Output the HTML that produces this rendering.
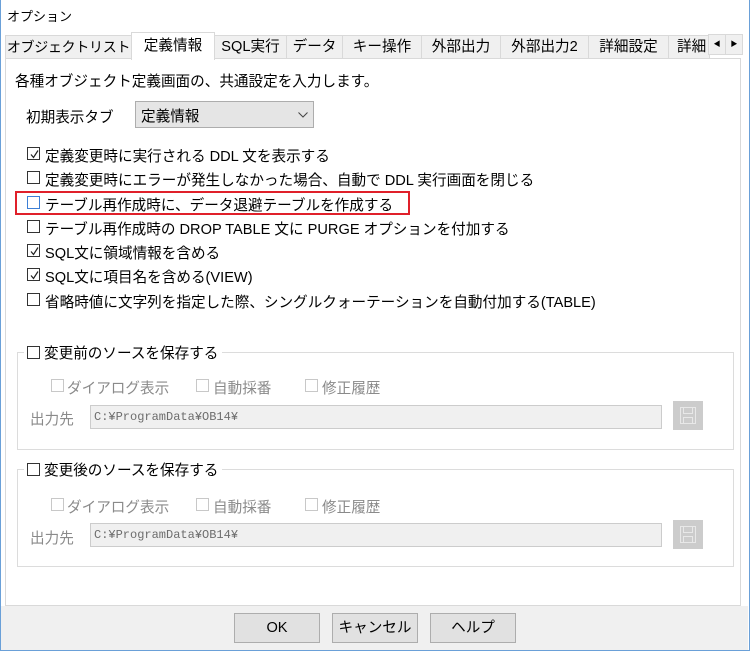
<!DOCTYPE html>
<html><head><meta charset="utf-8"><style>
*{box-sizing:border-box;margin:0;padding:0}
body{width:750px;height:651px;position:relative;background:#fff;font-family:"Liberation Sans","Noto Sans CJK JP",sans-serif;font-size:14.6px;color:#000;overflow:hidden}
.a{position:absolute;white-space:nowrap}
.win{position:absolute;left:0;top:0;width:750px;height:651px;border:1px solid #6aa0d8;border-top:none}
.tab{position:absolute;top:35px;height:24px;background:#f0f0f0;border:1px solid #d9d9d9;font-size:14.6px;line-height:22px;text-align:center;white-space:nowrap;overflow:hidden}
.panel{position:absolute;left:5px;top:58px;width:736px;height:548px;border:1px solid #d9d9d9;background:#fff}
.bot{position:absolute;left:1px;top:606px;width:747px;height:44px;background:#f0f0f0}
.cb{position:absolute;width:13px;height:13px;border:1px solid #333;background:#fff}
.cb.g{border-color:#c8c8c8}
.cb svg{position:absolute;left:1px;top:1px}
.btn{position:absolute;top:613px;height:30px;width:86px;border:1px solid #adadad;background:#e1e1e1;text-align:center;line-height:28px}
.grp{position:absolute;left:17px;width:717px;height:98px;border:1px solid #dcdcdc}
.inp{position:absolute;left:90px;width:572px;height:24px;border:1px solid #ccc;background:#f0f0f0;font-family:"Liberation Mono","Noto Sans CJK JP",monospace;font-size:12px;line-height:22px;padding-left:3px;color:#6d6d6d}
.sv{position:absolute;left:673px;width:30px;height:29px;background:#ccc}
.sv svg{position:absolute;left:7px;top:6px}
.gt{color:#8a8a8a}
</style></head><body>
<div class="a" style="left:7px;top:6px;font-size:13px">オプション</div>
<div class="panel"></div>
<div class="tab" style="left:5px;width:127px;font-size:14px;letter-spacing:-0.3px">オブジェクトリスト</div>
<div class="tab" style="left:131px;top:32px;height:28px;width:84px;background:#fff;border-bottom:none;line-height:26px;z-index:2">定義情報</div>
<div class="tab" style="left:214px;width:73px">SQL実行</div>
<div class="tab" style="left:286px;width:57px">データ</div>
<div class="tab" style="left:342px;width:80px">キー操作</div>
<div class="tab" style="left:421px;width:80px">外部出力</div>
<div class="tab" style="left:500px;width:89px">外部出力2</div>
<div class="tab" style="left:588px;width:81px">詳細設定</div>
<div class="tab" style="left:668px;width:42px;text-align:left;padding-left:8px">詳細</div>
<div class="tab" style="left:708px;top:34px;width:18px;height:21px;font-size:7px;line-height:19px">◀</div>
<div class="tab" style="left:725px;top:34px;width:18px;height:21px;font-size:7px;line-height:19px">▶</div>

<div class="a" style="left:15px;top:70px">各種オブジェクト定義画面の、共通設定を入力します。</div>
<div class="a" style="left:26px;top:106px">初期表示タブ</div>
<div class="a" style="left:135px;top:101px;width:179px;height:27px;border:1px solid #adadad;background:#e5e5e5;padding:3px 0 0 5px">定義情報<svg style="position:absolute;left:162px;top:10px" width="10" height="6"><path d="M0.5 0.5 L5 5 L9.5 0.5" fill="none" stroke="#444"/></svg></div>

<div class="cb" style="left:27px;top:147px"><svg width="11" height="11"><path d="M2 5.5 L4.5 8.5 L9 1.5" fill="none" stroke="#222" stroke-width="1.2"/></svg></div>
<div class="a" style="left:45px;top:145px">定義変更時に実行される DDL 文を表示する</div>
<div class="cb" style="left:27px;top:171px"></div>
<div class="a" style="left:45px;top:169px">定義変更時にエラーが発生しなかった場合、自動で DDL 実行画面を閉じる</div>
<div class="a" style="left:15px;top:191px;width:395px;height:24px;border:2px solid #e0202a"></div>
<div class="cb" style="left:27px;top:196px;border-color:#3d7fd6"></div>
<div class="a" style="left:45px;top:194px">テーブル再作成時に、データ退避テーブルを作成する</div>
<div class="cb" style="left:27px;top:220px"></div>
<div class="a" style="left:45px;top:218px">テーブル再作成時の DROP TABLE 文に PURGE オプションを付加する</div>
<div class="cb" style="left:27px;top:244px"><svg width="11" height="11"><path d="M2 5.5 L4.5 8.5 L9 1.5" fill="none" stroke="#222" stroke-width="1.2"/></svg></div>
<div class="a" style="left:45px;top:242px">SQL文に領域情報を含める</div>
<div class="cb" style="left:27px;top:268px"><svg width="11" height="11"><path d="M2 5.5 L4.5 8.5 L9 1.5" fill="none" stroke="#222" stroke-width="1.2"/></svg></div>
<div class="a" style="left:45px;top:266px">SQL文に項目名を含める(VIEW)</div>
<div class="cb" style="left:27px;top:293px"></div>
<div class="a" style="left:45px;top:291px">省略時値に文字列を指定した際、シングルクォーテーションを自動付加する(TABLE)</div>

<div class="grp" style="top:352px"></div>
<div class="a" style="left:24px;top:342px;background:#fff;padding:0 4px 0 3px;height:20px"><span class="cb" style="left:3px;top:4px;position:absolute"></span><span style="margin-left:17px">変更前のソースを保存する</span></div>
<div class="cb g" style="left:51px;top:379px"></div><div class="a gt" style="left:67px;top:377px">ダイアログ表示</div>
<div class="cb g" style="left:196px;top:379px"></div><div class="a gt" style="left:213px;top:377px">自動採番</div>
<div class="cb g" style="left:305px;top:379px"></div><div class="a gt" style="left:322px;top:377px">修正履歴</div>
<div class="a gt" style="left:30px;top:408px">出力先</div>
<div class="inp" style="top:405px">C:¥ProgramData¥OB14¥</div>
<div class="sv" style="top:401px"><svg width="16" height="17"><path d="M0.5 0.5 H15.5 V16.5 H0.5 Z M3.5 0.5 V6.5 H12.5 V0.5 M3.5 16.5 V10.5 H12.5 V16.5" fill="none" stroke="#e8e8e8"/></svg></div>

<div class="grp" style="top:469px"></div>
<div class="a" style="left:24px;top:459px;background:#fff;padding:0 4px 0 3px;height:20px"><span class="cb" style="left:3px;top:4px;position:absolute"></span><span style="margin-left:17px">変更後のソースを保存する</span></div>
<div class="cb g" style="left:51px;top:498px"></div><div class="a gt" style="left:67px;top:496px">ダイアログ表示</div>
<div class="cb g" style="left:196px;top:498px"></div><div class="a gt" style="left:213px;top:496px">自動採番</div>
<div class="cb g" style="left:305px;top:498px"></div><div class="a gt" style="left:322px;top:496px">修正履歴</div>
<div class="a gt" style="left:30px;top:527px">出力先</div>
<div class="inp" style="top:523px">C:¥ProgramData¥OB14¥</div>
<div class="sv" style="top:520px"><svg width="16" height="17"><path d="M0.5 0.5 H15.5 V16.5 H0.5 Z M3.5 0.5 V6.5 H12.5 V0.5 M3.5 16.5 V10.5 H12.5 V16.5" fill="none" stroke="#e8e8e8"/></svg></div>

<div class="bot"></div>
<div class="btn" style="left:234px">OK</div>
<div class="btn" style="left:332px">キャンセル</div>
<div class="btn" style="left:430px">ヘルプ</div>
<div class="win"></div>
</body></html>
